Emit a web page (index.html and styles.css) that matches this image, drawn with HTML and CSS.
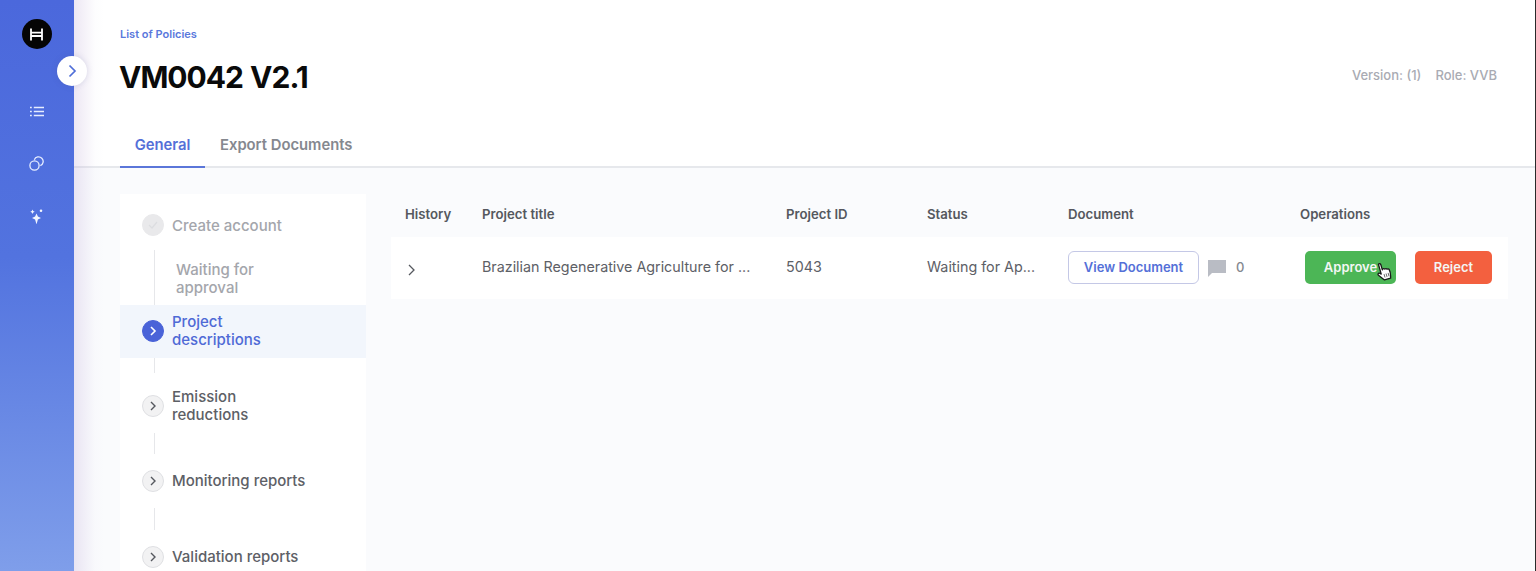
FILE: index.html
```html
<!DOCTYPE html>
<html lang="en">
<head>
<meta charset="utf-8">
<title>VM0042 V2.1</title>
<link rel="stylesheet" href="styles.css">
</head>
<body>
<div class="app">
  <aside class="sidebar">
    <div class="logo">
      <svg width="15" height="13" viewBox="0 0 15 13"><path d="M2 .5v12M13 .5v12M2 4.700h11M2 8h11" fill="none" stroke="#fff" stroke-width="1.800"/></svg>
    </div>
    <nav class="side-nav">
      <span class="nav-item"><svg width="14" height="11" viewBox="0 0 14 11"><g fill="none" stroke="#e6edff" stroke-width="1.400"><path d="M3.800 1.500H14M3.800 5.500H14M3.800 9.500H14"/><path d="M0 1.500h1.800M0 5.500h1.800M0 9.500h1.800"/></g></svg></span>
      <span class="nav-item"><svg width="15" height="15" viewBox="0 0 15 15"><g fill="none" stroke="#e6edff" stroke-width="1.300"><circle cx="5.500" cy="9.500" r="4.600"/><path d="M5.300 3.700A4.600 4.600 0 1 1 11.300 9.700"/></g></svg></span>
      <span class="nav-item"><svg width="13" height="15" viewBox="0 0 13 15"><g fill="#f2f6ff"><path d="M6.500 4.500l1.400 3.100 3.100 1.400-3.100 1.400-1.400 5-1.400-5L2 9l3.100-1.400z"/><path d="M2.500.5l.7 1.500 1.500.7-1.500.7-.7 1.500-.7-1.500L.3 2.700l1.500-.7z"/><circle cx="11" cy="1.800" r="1.300"/></g></svg></span>
    </nav>
  </aside>
  <button class="toggle" type="button" aria-label="Expand">
    <svg width="10" height="14" viewBox="0 0 10 14"><path d="M2.500 1.500L8 7l-5.500 5.500" fill="none" stroke="#4f6ed8" stroke-width="1.700"/></svg>
  </button>
  <main class="main">
    <header class="header">
      <div class="head-row">
        <div>
          <a class="crumb">List of Policies</a>
          <h1 class="title">VM0042 V2.1</h1>
        </div>
        <div class="meta"><span>Version: (1)</span><span>Role: VVB</span></div>
      </div>
      <div class="tabs">
        <div class="tab tab-active">General</div>
        <div class="tab">Export Documents</div>
      </div>
    </header>
    <div class="content">
      <section class="steps">
        <div class="step step-done">
          <span class="dot dot-done"><svg width="12" height="10" viewBox="0 0 12 10"><path d="M2 5l3 3 5-6" fill="none" stroke="#dcdde0" stroke-width="1.200"/></svg></span>
          <span class="step-label">Create account</span>
        </div>
        <div class="substep"><span class="substep-label">Waiting for approval</span></div>
        <div class="step step-active">
          <span class="dot dot-active"><svg width="8" height="10" viewBox="0 0 8 10"><path d="M2 1l4 4-4 4" fill="none" stroke="#fff" stroke-width="1.600"/></svg></span>
          <span class="step-label">Project descriptions</span>
        </div>
        <div class="line line-short"></div>
        <div class="step step-two">
          <span class="dot"><svg width="8" height="10" viewBox="0 0 8 10"><path d="M2 1l4 4-4 4" fill="none" stroke="#55585e" stroke-width="1.400"/></svg></span>
          <span class="step-label">Emission reductions</span>
        </div>
        <div class="line line-mid"></div>
        <div class="step step-one">
          <span class="dot"><svg width="8" height="10" viewBox="0 0 8 10"><path d="M2 1l4 4-4 4" fill="none" stroke="#55585e" stroke-width="1.400"/></svg></span>
          <span class="step-label">Monitoring reports</span>
        </div>
        <div class="line"></div>
        <div class="step step-one">
          <span class="dot"><svg width="8" height="10" viewBox="0 0 8 10"><path d="M2 1l4 4-4 4" fill="none" stroke="#55585e" stroke-width="1.400"/></svg></span>
          <span class="step-label">Validation reports</span>
        </div>
      </section>
      <section class="table">
        <div class="row row-head">
          <div class="c-hist">History</div>
          <div class="c-title">Project title</div>
          <div class="c-id">Project ID</div>
          <div class="c-status">Status</div>
          <div class="c-doc">Document</div>
          <div class="c-ops">Operations</div>
        </div>
        <div class="row row-body">
          <div class="c-hist"><svg class="expand" width="9" height="12" viewBox="0 0 9 12"><path d="M2 1l5 5-5 5" fill="none" stroke="#55585e" stroke-width="1.300"/></svg></div>
          <div class="c-title">Brazilian Regenerative Agriculture for ...</div>
          <div class="c-id">5043</div>
          <div class="c-status">Waiting for Ap...</div>
          <div class="c-doc">
            <button class="btn-view" type="button">View Document</button>
            <svg class="comment" width="20" height="18" viewBox="0 0 20 18"><path d="M1 1h18v13H5l-4 4z" fill="#b9bcc4"/></svg>
            <span class="count">0</span>
          </div>
          <div class="c-ops">
            <button class="btn btn-approve" type="button">Approve</button>
            <button class="btn btn-reject" type="button">Reject</button>
            <svg class="cursor" width="18" height="21" viewBox="0 0 18 21"><g transform="rotate(-16 9 10)"><path d="M5.500 2c1-.7 2.200 0 2.200 1.100V8.500l.5-.7c.9-.5 1.800-.2 2.100.6.800-.5 1.800-.2 2.100.7.800-.4 1.800 0 2 1 .4 2 .2 4.500-.4 6.400l-.6 2.200H7L2.500 12.500c-.7-1 .4-2.400 1.600-1.600l1.400 1.300z" fill="#fff" stroke="#1a1a1a" stroke-width="1.300" stroke-linejoin="round"/><path d="M8.200 13v3.500M10.300 13v3.500M12.400 13v3.500" fill="none" stroke="#555" stroke-width=".8"/></g></svg>
          </div>
        </div>
      </section>
    </div>
  </main>
  <div class="edge"></div>
</div>
</body>
</html>
```

FILE: styles.css
```css
* { box-sizing: border-box; }
html, body { margin: 0; height: 100%; overflow: hidden; }
body { font-family: Inter, "Liberation Sans", sans-serif; background: #fff; color: #55585e; }
.app { position: relative; display: flex; height: 571px; width: 1536px; overflow: hidden; }
.sidebar {
  width: 74px; flex: none;
  background: linear-gradient(180deg, #4b68dc 0%, #5273df 45%, #7f9eea 100%);
  display: flex; flex-direction: column; align-items: center;
  padding-top: 19px;
}
.logo {
  width: 30px; height: 30px; margin-right: 1px; border-radius: 50%; background: #050505;
  display: flex; align-items: center; justify-content: center;
}
.side-nav { display: flex; flex-direction: column; align-items: center; margin-top: 36px; margin-right: 1px; }
.nav-item { height: 52.500px; display: flex; align-items: center; justify-content: center; }
.toggle {
  position: absolute; z-index: 2; left: 57px; top: 56px; width: 30px; height: 30px; padding: 0;
  border: 0; border-radius: 50%; background: #fff;
  box-shadow: 0 0 6px rgba(70, 80, 140, .18);
  display: flex; align-items: center; justify-content: center;
}
.main { flex: 1; min-width: 0; display: flex; flex-direction: column; position: relative; }
.main::before {
  content: ""; position: absolute; left: 0; top: 0; bottom: 0; width: 30px;
  background: linear-gradient(90deg, rgba(190, 170, 215, .28), rgba(230, 225, 240, .08) 70%, rgba(255, 255, 255, 0));
  pointer-events: none;
}
.header { height: 168px; flex: none; background: #fff; border-bottom: 2px solid #e6e8ec; padding: 0 39px 0 46px; display: flex; flex-direction: column; }
.head-row { display: flex; justify-content: space-between; align-items: flex-start; height: 128px; padding-top: 27px; }
.crumb { display: block; font-size: 11px; font-weight: 600; line-height: 14px; color: #5a78dc; }
.title { margin: 16px 0 0 -1px; font-size: 30px; line-height: 40px; font-weight: 700; color: #0a0a0a; letter-spacing: -1px; word-spacing: 1px; }
.meta { display: flex; gap: 14px; margin-top: 40px; font-size: 13px; line-height: 16px; font-weight: 500; color: #a9abb3; }
.tabs { display: flex; margin-bottom: -2px; height: 40px; }
.tab { padding: 8px 0 0; font-size: 14.800px; line-height: 18px; font-weight: 600; color: #85888f; }
.tab-active { width: 85px; margin-right: 15px; text-align: center; color: #5470d8; border-bottom: 2px solid #5b76d9; }
.content { flex: 1; min-height: 0; background: #fafbfd; display: flex; padding: 26px 28px 0 46px; }
.steps { width: 246px; flex: none; background: #fff; padding-top: 16px; }
.step { display: flex; align-items: center; gap: 8px; padding-left: 22px; font-size: 15px; line-height: 18px; font-weight: 500; color: #5d6066; }
.step-label { width: 140px; }
.step-done { height: 30px; color: #a4a6ac; }
.step-done .step-label { padding-top: 2px; }
.step-active { height: 53px; padding-bottom: 2px; color: #4f6ad6; background: #f2f6fc; }
.step-two { height: 37px; }
.step-one { height: 22px; }
.dot {
  width: 22px; height: 22px; flex: none; border-radius: 50%; background: #f2f2f3; border: 1px solid #dfe0e3;
  display: flex; align-items: center; justify-content: center;
}
.dot-done { background: #e9e9eb; border-color: #e9e9eb; }
.dot-active { background: #4a63d8; border-color: #4a63d8; }
.substep { margin: 10px 0 0 34px; height: 55px; padding: 11px 0 0 21px; border-left: 1px solid #e6e7ea; }
.substep-label { display: block; width: 120px; font-size: 15px; line-height: 18px; font-weight: 500; color: #a4a6ac; }
.line { width: 1px; height: 22px; margin: 16px 0 16px 34px; background: #e6e7ea; }
.line-short { height: 15px; margin: 0 0 14px 34px; }
.line-mid { height: 21px; margin: 9px 0 16px 34px; }
.table { flex: 1; min-width: 0; padding-left: 25px; }
.row { display: flex; align-items: center; font-size: 14.300px; font-weight: 400; color: #5d6066; }
.row-head { height: 43px; padding-bottom: 3px; font-size: 13.200px; line-height: 16px; font-weight: 600; color: #55585e; }
.row-body { height: 62px; padding-bottom: 2px; background: #fff; line-height: 18px; }
.c-hist { width: 91px; padding-left: 15px; flex: none; }
.row-head .c-hist { padding-left: 14px; }
.c-title { width: 304px; flex: none; }
.c-id { width: 141px; flex: none; }
.c-status { width: 141px; flex: none; }
.c-doc { width: 232px; flex: none; display: flex; align-items: center; }
.c-ops { flex: 1; display: flex; align-items: center; position: relative; }
.expand { display: block; margin-top: 5px; margin-left: 1px; }
.comment { margin-top: 2px; }
.btn-view {
  width: 131px; height: 33px; padding: 0; margin-right: 8px; background: #fff;
  border: 1px solid #c4c8e6; border-radius: 6px;
  font: 600 13px/16px Inter, "Liberation Sans", sans-serif; color: #5470d8;
}
.count { margin-left: 9px; font-size: 13px; font-weight: 500; color: #85888f; }
.btn {
  height: 33px; padding: 0; border: 0; border-radius: 5px; color: #f4f6f4;
  font: 600 13px/16px Inter, "Liberation Sans", sans-serif;
}
.btn-approve { width: 91px; margin-left: 5px; margin-right: 19px; background: #4cb656; }
.btn-reject { width: 77px; background: #f3603f; }
.cursor { position: absolute; left: 75px; top: 10px; }
.edge { position: absolute; right: 0; top: 0; bottom: 0; width: 1px; background: #2a2a2a; }
```
